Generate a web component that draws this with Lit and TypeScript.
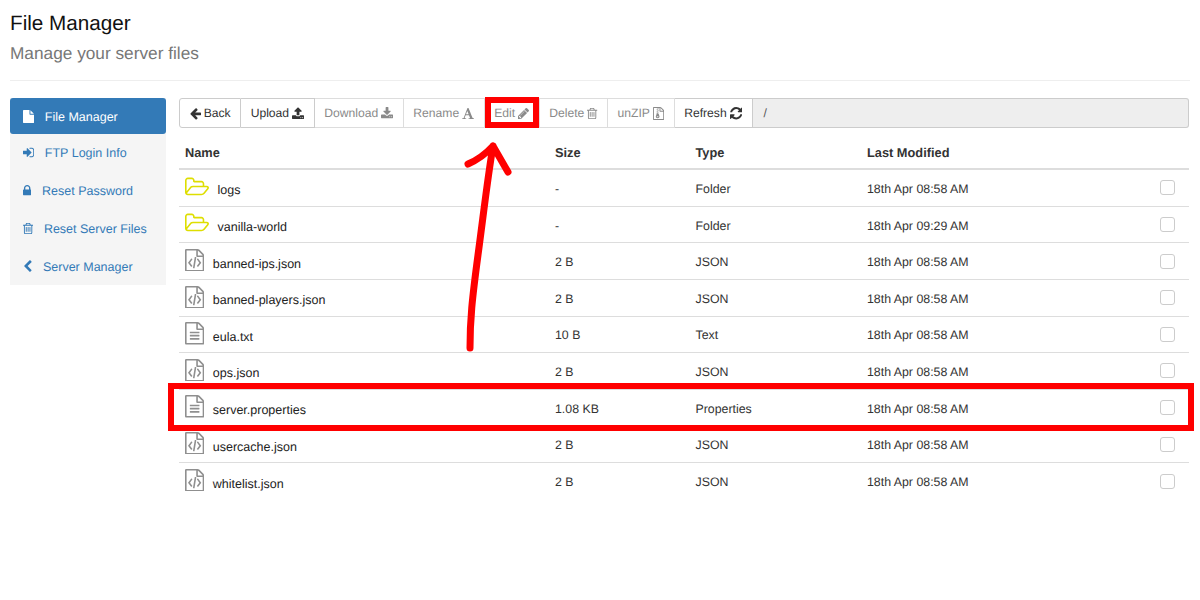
import { LitElement, html, css, svg } from "lit";
import { customElement } from "lit/decorators.js";

const FILE_O = "M1596 380q28 28 48 76t20 88v1152q0 40-28 68t-68 28h-1344q-40 0-68-28t-28-68v-1600q0-40 28-68t68-28h896q40 0 88 20t76 48zm-444-244v376h376q-10-29-22-41l-313-313q-12-12-41-22zm384 1528v-1024h-416q-40 0-68-28t-28-68v-416h-768v1536h1280z";

const ICONS: Record<string, [number, number, string]> = {
  file: [1792, 1536, "M1152 512v-472q22 14 36 28l408 408q14 14 28 36h-472zm-128 32q0 40 28 68t68 28h544v1056q0 40-28 68t-68 28h-1344q-40 0-68-28t-28-68v-1600q0-40 28-68t68-28h800v544z"],
  signin: [1792, 1536, "M1312 896q0 26-19 45l-544 544q-19 19-45 19t-45-19-19-45v-288h-448q-26 0-45-19t-19-45v-384q0-26 19-45t45-19h448v-288q0-26 19-45t45-19 45 19l544 544q19 19 19 45zm352-352v704q0 119-84.5 203.5t-203.5 84.5h-320q-13 0-22.5-9.5t-9.5-22.5q0-4-1-20t-.5-26.5 3-23.5 10-19.5 20.5-6.5h320q66 0 113-47t47-113v-704q0-66-47-113t-113-47h-312l-11.5-1-11.5-3-8-5.5-7-9-2-13.5q0-4-1-20t-.5-26.5 3-23.5 10-19.5 20.5-6.5h320q119 0 203.5 84.5t84.5 203.5z"],
  lock: [1792, 1152, "M640 768h512v-192q0-106-75-181t-181-75-181 75-75 181v192zm832 96v576q0 40-28 68t-68 28h-960q-40 0-68-28t-28-68v-576q0-40 28-68t68-28h32v-192q0-184 132-316t316-132 316 132 132 316v192h32q40 0 68 28t28 68z"],
  trash: [1792, 1408, "M704 736v576q0 14-9 23t-23 9h-64q-14 0-23-9t-9-23v-576q0-14 9-23t23-9h64q14 0 23 9t9 23zm256 0v576q0 14-9 23t-23 9h-64q-14 0-23-9t-9-23v-576q0-14 9-23t23-9h64q14 0 23 9t9 23zm256 0v576q0 14-9 23t-23 9h-64q-14 0-23-9t-9-23v-576q0-14 9-23t23-9h64q14 0 23 9t9 23zm128 724v-948h-896v948q0 22 7 40.5t14.5 27 10.5 8.5h832q3 0 10.5-8.5t14.5-27 7-40.5zm-672-1076h448l-48-117q-7-9-17-11h-317q-10 2-17 11zm928 32v64q0 14-9 23t-23 9h-96v948q0 83-47 143.5t-113 60.5h-832q-66 0-113-58.5t-47-141.5v-952h-96q-14 0-23-9t-9-23v-64q0-14 9-23t23-9h309l70-167q15-37 54-63t79-26h320q40 0 79 26t54 63l70 167h309q14 0 23 9t9 23z"],
  chevron: [1792, 1280, "M1427 301l-531 531 531 531q19 19 19 45t-19 45l-166 166q-19 19-45 19t-45-19l-742-742q-19-19-19-45t19-45l742-742q19-19 45-19t45 19l166 166q19 19 19 45t-19 45z"],
  arrow: [1792, 1536, "M1664 896v128q0 53-32.5 90.5t-84.5 37.5h-704l293 294q38 36 38 90t-38 90l-75 76q-37 37-90 37-52 0-91-37l-651-652q-37-37-37-90 0-52 37-91l651-650q38-38 91-38 52 0 90 38l75 74q38 38 38 91t-38 91l-293 293h704q52 0 84.5 37.5t32.5 90.5z"],
  upload: [1792, 1664, "M1344 1472q0-26-19-45t-45-19-45 19-19 45 19 45 45 19 45-19 19-45zm256 0q0-26-19-45t-45-19-45 19-19 45 19 45 45 19 45-19 19-45zm128-224v320q0 40-28 68t-68 28h-1472q-40 0-68-28t-28-68v-320q0-40 28-68t68-28h427q21 56 70.5 92t110.5 36h256q61 0 110.5-36t70.5-92h427q40 0 68 28t28 68zm-325-648q-17 40-59 40h-256v448q0 26-19 45t-45 19h-256q-26 0-45-19t-19-45v-448h-256q-42 0-59-40-17-39 14-69l448-448q18-19 45-19t45 19l448 448q31 30 14 69z"],
  download: [1792, 1664, "M1344 1344q0-26-19-45t-45-19-45 19-19 45 19 45 45 19 45-19 19-45zm256 0q0-26-19-45t-45-19-45 19-19 45 19 45 45 19 45-19 19-45zm128-224v320q0 40-28 68t-68 28h-1472q-40 0-68-28t-28-68v-320q0-40 28-68t68-28h465l135 136q58 56 136 56t136-56l136-136h464q40 0 68 28t28 68zm-325-569q17 41-14 70l-448 448q-18 19-45 19t-45-19l-448-448q-31-29-14-70 17-39 59-39h256v-448q0-26 19-45t45-19h256q26 0 45 19t19 45v448h256q42 0 59 39z"],
  font: [1792, 1664, "M789 559l-170 450q33 0 136.5 2t160.5 2q19 0 57-2-87-253-184-452zm-725 1105l2-79q23-7 56-12.5t57-10.5 49.5-14.5 44.5-29 31-50.5l237-616 280-724h128q8 14 11 21l205 480q33 78 106 257.5t114 274.5q15 34 58 144.5t72 168.5q20 45 35 57 19 15 88 29.5t84 20.5q6 38 6 57 0 5-.5 13.5t-.5 12.5q-63 0-190-8t-191-8q-76 0-215 7t-178 8q0-43 4-78l131-28q1 0 12.5-2.5t15.5-3.5 14.5-4.5 15-6.5 11-8 9-11 2.5-14q0-16-31-96.5t-72-177.5-42-100l-450-2q-26 58-76.5 195.5t-50.5 162.5q0 22 14 37.5t43.5 24.5 48.5 13.5 57 8.5 41 4q1 19 1 58 0 9-2 27-58 0-174.5-10t-174.5-10q-8 0-26.5 4t-21.5 4q-80 14-188 14z"],
  pencil: [1792, 1536, "M491 1536l91-91-235-235-91 91v107h128v128h107zm523-928q0-22-22-22-10 0-17 7l-542 542q-7 7-7 17 0 22 22 22 10 0 17-7l542-542q7-7 7-17zm-54-192l416 416-832 832h-416v-416zm683 96q0 53-37 90l-166 166-416-416 166-165q36-38 90-38 53 0 91 38l235 234q37 39 37 91z"],
  zip: [1792, 1536, "M768 384v-128h-128v128h128zm128 128v-128h-128v128h128zm-128 128v-128h-128v128h128zm128 128v-128h-128v128h128zm700-388q28 28 48 76t20 88v1152q0 40-28 68t-68 28h-1344q-40 0-68-28t-28-68v-1600q0-40 28-68t68-28h896q40 0 88 20t76 48zm-444-244v376h376q-10-29-22-41l-313-313q-12-12-41-22zm384 1528v-1024h-416q-40 0-68-28t-28-68v-416h-128v128h-128v-128h-512v1536h1280zm-627-721l107 349q8 27 8 52 0 83-72.5 137.5t-183.5 54.5-183.5-54.5-72.5-137.5q0-25 8-52 21-63 120-396v-128h128v128h79q22 0 39 13t23 34zm-141 465q53 0 90.5-19t37.5-45-37.5-45-90.5-19-90.5 19-37.5 45 37.5 45 90.5 19z"],
  refresh: [1792, 1536, "M1639 1056q0 5-1 7-64 268-268 434.5t-478 166.5q-146 0-282.5-55t-243.5-157l-129 129q-19 19-45 19t-45-19-19-45v-448q0-26 19-45t45-19h448q26 0 45 19t19 45-19 45l-137 137q71 66 161 102t187 36q134 0 250-65t186-179q11-17 53-117 8-23 30-23h192q13 0 22.5 9.5t9.5 22.5zm25-800v448q0 26-19 45t-45 19h-448q-26 0-45-19t-19-45 19-45l138-138q-148-137-349-137-134 0-250 65t-186 179q-11 17-53 117-8 23-30 23h-199q-13 0-22.5-9.5t-9.5-22.5v-7q65-268 270-434.5t480-166.5q146 0 284 55.5t245 156.5l130-129q19-19 45-19t45 19 19 45z"],
  folder: [1920, 1920, "M1781 931q0-35-53-35h-1088q-40 0-85.5 21.5t-71.5 52.5l-294 363q-18 24-18 40 0 35 53 35h1088q40 0 86-22t71-53l294-363q18-22 18-39zm-1141-163h768v-160q0-40-28-68t-68-28h-576q-40 0-68-28t-28-68v-64q0-40-28-68t-68-28h-320q-40 0-68 28t-28 68v853l256-315q44-53 116-87.5t140-34.5zm1269 163q0 62-46 120l-295 363q-43 53-116 87.5t-140 34.5h-1088q-92 0-158-66t-66-158v-960q0-92 66-158t158-66h320q92 0 158 66t66 158v32h544q92 0 158 66t66 158v160h192q54 0 99 24.5t67 70.5q15 32 15 68z"],
  code: [1792, 1536, FILE_O + "m-928-896q8-11 21-12.5t24 6.5l51 38q11 8 12.5 21t-6.5 24l-182 243 182 243q8 11 6.5 24t-12.5 21l-51 38q-11 8-24 6.5t-21-12.5l-226-301q-14-19 0-38zm802 301q14 19 0 38l-226 301q-8 11-21 12.5t-24-6.5l-51-38q-11-8-12.5-21t6.5-24l182-243-182-243q-8-11-6.5-24t12.5-21l51-38q11-8 24-6.5t21 12.5zm-620 461q-13-2-20.5-13t-5.5-24l138-831q2-13 13-20.5t24-5.5l63 10q13 2 20.5 13t5.5 24l-138 831q-2 13-13 20.5t-24 5.5z"],
  text: [1792, 1536, FILE_O + "m-1024-864q0-14 9-23t23-9h704q14 0 23 9t9 23v64q0 14-9 23t-23 9h-704q-14 0-23-9t-9-23v-64zm736 224q14 0 23 9t9 23v64q0 14-9 23t-23 9h-704q-14 0-23-9t-9-23v-64q0-14 9-23t23-9h704zm0 256q14 0 23 9t9 23v64q0 14-9 23t-23 9h-704q-14 0-23-9t-9-23v-64q0-14 9-23t23-9h704z"],
};

function icon(name: string, size: number) {
  const [box, adv, d] = ICONS[name];
  const x = (box - adv) / 2;
  return html`<svg class="ic" viewBox="${x} 0 ${adv} 1792" width=${(size * adv) / 1792} height=${size} aria-hidden="true"><path d=${d} fill="currentColor"></path></svg>`;
}

const NAV = [
  { icon: "file", label: "File Manager", active: true },
  { icon: "signin", label: "FTP Login Info" },
  { icon: "lock", label: "Reset Password" },
  { icon: "trash", label: "Reset Server Files" },
  { icon: "chevron", label: "Server Manager" },
];

const TOOLS = [
  { label: "Back", icon: "arrow", size: 13, before: true },
  { label: "Upload", icon: "upload", size: 13 },
  { label: "Download", icon: "download", size: 13, off: true },
  { label: "Rename", icon: "font", size: 13, off: true },
  { label: "Edit", icon: "pencil", size: 13, off: true },
  { label: "Delete", icon: "trash", size: 13, off: true },
  { label: "unZIP", icon: "zip", size: 13, off: true },
  { label: "Refresh", icon: "refresh", size: 14.5 },
];

const FILES = [
  ["folder", "logs", "-", "Folder", "18th Apr 08:58 AM"],
  ["folder", "vanilla-world", "-", "Folder", "18th Apr 09:29 AM"],
  ["code", "banned-ips.json", "2 B", "JSON", "18th Apr 08:58 AM"],
  ["code", "banned-players.json", "2 B", "JSON", "18th Apr 08:58 AM"],
  ["text", "eula.txt", "10 B", "Text", "18th Apr 08:58 AM"],
  ["code", "ops.json", "2 B", "JSON", "18th Apr 08:58 AM"],
  ["text", "server.properties", "1.08 KB", "Properties", "18th Apr 08:58 AM"],
  ["code", "usercache.json", "2 B", "JSON", "18th Apr 08:58 AM"],
  ["code", "whitelist.json", "2 B", "JSON", "18th Apr 08:58 AM"],
];

@customElement("app-root")
export class AppRoot extends LitElement {
  static styles = css`
    :host {
      display: block;
      position: relative;
      width: 1200px;
      height: 600px;
      overflow: hidden;
      background: #fff;
      color: #333;
      font-family: "Liberation Sans", Arial, sans-serif;
      font-size: 12.35px;
      text-rendering: geometricPrecision;
    }
    .ic { display: block; flex: none; }
    .page { padding: 13px 10px 0; }
    h1 { margin: 0; font-size: 20.7px; font-weight: 400; line-height: 22px; color: #111; }
    .sub { margin-top: 7px; font-size: 17.25px; line-height: 22px; color: #777; }
    hr { margin: 16px 0 17px; border: 0; border-top: 1px solid #eee; }
    .cols { display: flex; gap: 13px; align-items: flex-start; }
    .nav { width: 156px; flex: none; background: #f5f5f5; font-size: 12.5px; }
    .nav a {
      display: flex; align-items: center; gap: 10.7px;
      height: 37.8px; padding-left: 13px; color: #337ab7; box-sizing: border-box;
    }
    .nav a span { padding-top: 1px; }
    .nav a.active { height: 36px; background: #337ab7; color: #fff; border-radius: 3px; }
    .main { flex: 1; min-width: 0; padding-right: 1px; }
    .bar { display: flex; height: 30px; font-size: 12.15px; }
    .btn {
      display: flex; align-items: center; gap: 3px; box-sizing: border-box;
      padding: 0 9.5px; background: #fff; color: #333;
      border: 1px solid #ccc; border-left-width: 0;
    }
    .btn:first-child { border-left-width: 1px; border-radius: 3px 0 0 3px; }
    .btn.off { color: #8a8a8a; border-color: #ddd; }
    .path {
      flex: 1; display: flex; align-items: center; padding-left: 11px;
      background: #eee; color: #555; border: 1px solid #ccc; border-left: 0;
      border-radius: 0 3px 3px 0; box-sizing: border-box;
    }
    .row {
      display: grid; grid-template-columns: 376px 140.5px 171.5px 1fr auto;
      align-items: center; height: 36.6px; box-sizing: border-box;
      border-bottom: 1px solid #ddd;
    }
    .row:last-child { border-bottom: 0; }
    .head { height: 42.2px; border-bottom: 2px solid #ddd; font-weight: 700; padding-top: 9px; font-size: 12.8px; }
    .row > div:first-child { padding-left: 6px; }
    .cell { padding-top: 2px; }
    .name { display: flex; align-items: center; gap: 8.5px; color: #222; font-size: 12.5px; }
    .name .ic { margin-top: -2px; }
    .name span { padding-top: 5px; }
    .folder { color: #dede00; }
    .file { color: #8f8f8f; }
    .box {
      margin-right: 14px; width: 15px; height: 15px; box-sizing: border-box;
      border: 1px solid #ccc; border-radius: 3px; background: #fff;
    }
    .marks { position: absolute; left: 0; top: 0; pointer-events: none; }
  `;

  render() {
    return html`
      <div class="page">
        <h1>File Manager</h1>
        <div class="sub">Manage your server files</div>
        <hr />
        <div class="cols">
          <nav class="nav">
            ${NAV.map(
              (n) => html`<a class=${n.active ? "active" : ""}>${icon(n.icon, 13)}<span>${n.label}</span></a>`
            )}
          </nav>
          <div class="main">
            <div class="bar">
              ${TOOLS.map(
                (t) => html`<div class="btn ${t.off ? "off" : ""}">
                  ${t.before ? icon(t.icon, t.size) : ""}<span>${t.label}</span>${t.before ? "" : icon(t.icon, t.size)}
                </div>`
              )}
              <div class="path">/</div>
            </div>
            <div class="row head">
              <div>Name</div><div>Size</div><div>Type</div><div>Last Modified</div>
            </div>
            ${FILES.map(
              (f) => html`<div class="row">
                <div class="name">
                  <div class=${f[0] === "folder" ? "folder" : "file"}>${icon(f[0], 22.5)}</div>
                  <span>${f[1]}</span>
                </div>
                <div class="cell">${f[2]}</div><div class="cell">${f[3]}</div><div class="cell">${f[4]}</div>
                <div class="box"></div>
              </div>`
            )}
          </div>
        </div>
      </div>
      ${svg`<svg class="marks" width="1200" height="600" fill="none" stroke="#f00">
        <rect x="488" y="100" width="48" height="25" stroke-width="6"></rect>
        <rect x="171" y="386" width="1020" height="42" stroke-width="6"></rect>
        <path d="M470 348C470 320 472 300 478 255C484 210 488 175 493 146M468 164Q482 158 493 146L508 172" stroke-width="7" stroke-linecap="round" stroke-linejoin="round"></path>
      </svg>`}
    `;
  }
}
